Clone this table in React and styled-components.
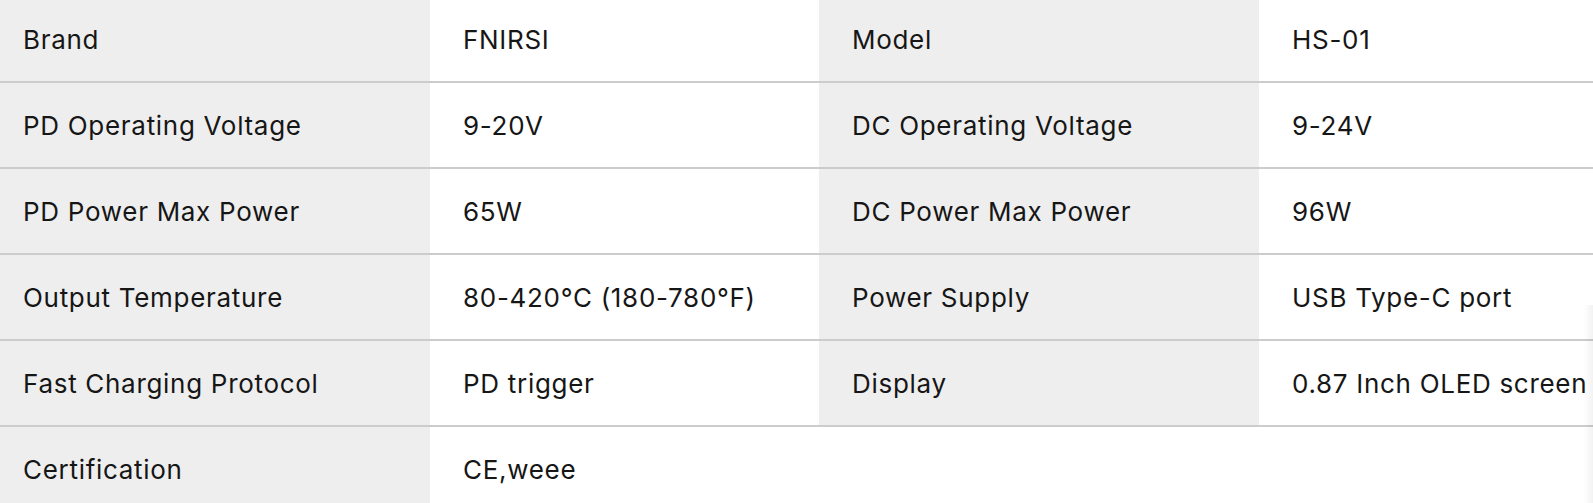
import React from 'react';
import styled, { createGlobalStyle } from 'styled-components';

const SPECS = [
  ['Brand', 'FNIRSI', 'Model', 'HS-01'],
  ['PD Operating Voltage', '9-20V', 'DC Operating Voltage', '9-24V'],
  ['PD Power Max Power', '65W', 'DC Power Max Power', '96W'],
  ['Output Temperature', '80-420°C (180-780°F)', 'Power Supply', 'USB Type-C port'],
  ['Fast Charging Protocol', 'PD trigger', 'Display', '0.87 Inch OLED screen'],
  ['Certification', 'CE,weee', '', ''],
];

const GlobalStyle = createGlobalStyle`
  html, body {
    margin     : 0;
    padding    : 0;
    background : #ffffff;
    overflow   : hidden;
  }
`;

const Page = styled.div`
  position    : relative;
  width       : 1593px;
  height      : 503px;
  overflow    : hidden;
  font-family : 'Inter', 'Roboto', sans-serif;
  color       : #161616;
`;

const SpecTable = styled.div`
  display        : flex;
  flex-direction : column;
  margin-top     : -3px;
`;

const Row = styled.div`
  display               : grid;
  grid-template-columns : 430px 389px 440px 1fr;
  border-bottom         : 2px solid #cccccc;
`;

const Cell = styled.div`
  display        : flex;
  align-items    : center;
  height         : 84px;
  padding-left   : ${props => (props.$first ? '23px' : '33px')};
  background     : ${props => (props.$label ? '#eeeeee' : '#ffffff')};
  font-size      : 26px;
  letter-spacing : 0.7px;
  white-space    : nowrap;
`;

const EdgeShade = styled.div`
  position   : absolute;
  top        : 305px;
  right      : 0;
  bottom     : 0;
  width      : 9px;
  background : linear-gradient(to right, rgba(0, 0, 0, 0), rgba(0, 0, 0, 0.05));
`;

const App = () => (
  <Page>
    <GlobalStyle />
    <SpecTable>
      {
        SPECS.map(row =>
          <Row key={row[0]}>
            {
              row.map((text, i) =>
                <Cell
                  key={i}
                  $label={i % 2 === 0 && text !== ''}
                  $first={i === 0}
                >
                  {text}
                </Cell>
              )
            }
          </Row>
        )
      }
    </SpecTable>
    <EdgeShade />
  </Page>
);

export default App;
